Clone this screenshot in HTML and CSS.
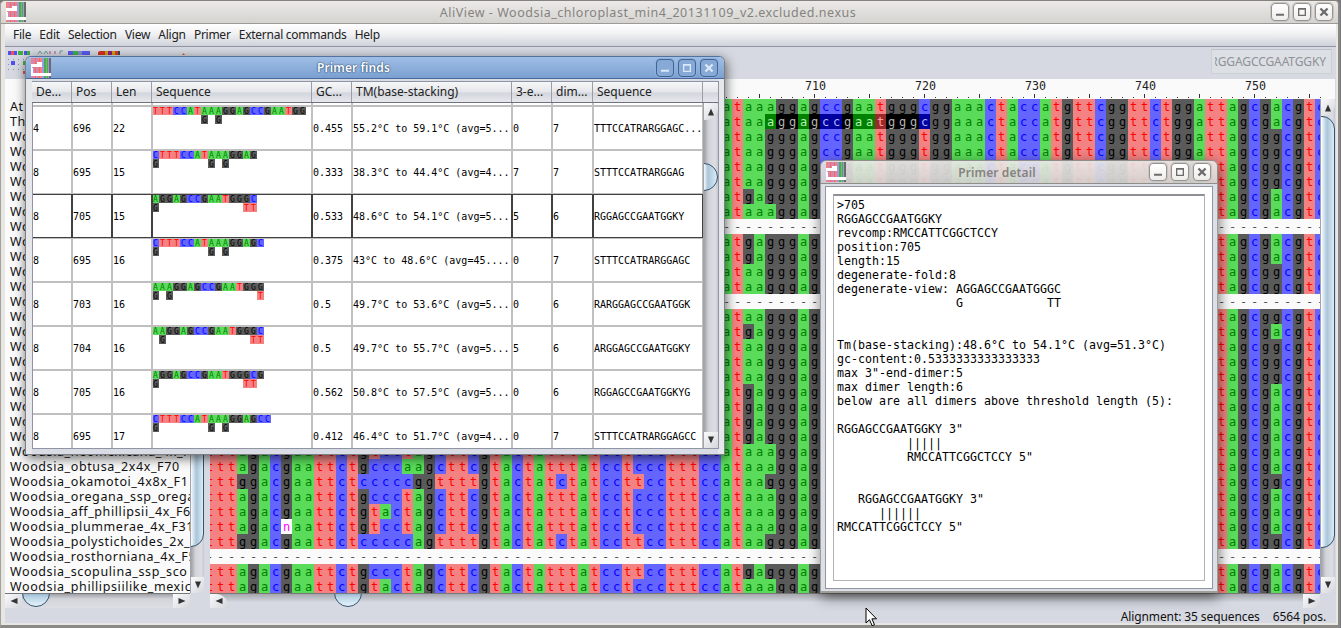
FILE: index.html
```html
<!DOCTYPE html>
<html lang="en">
<head>
<meta charset="utf-8">
<title>AliView</title>
<link rel="stylesheet" href="styles.css">
</head>
<body>
<svg width="0" height="0" class="defs">
  <symbol id="app" viewBox="0 0 20 20">
    <rect width="20" height="20" fill="#f48080"/>
    <path d="M2 0h1v20h-1zM6 0h1v20h-1z" fill="#b48ce0"/>
    <path d="M4 0h1v20h-1zM8 0h1v20h-1z" fill="#e46c78"/>
    <path d="M11 0h2v20h-2zM17 0h1v20h-1z" fill="#a098e8"/>
    <path d="M13 0h4v20h-4z" fill="#50a850"/><path d="M18 0h2v20h-2z" fill="#6a6a6a"/>
    <path d="M15 0h1v20h-1z" fill="#6cc06c"/>
    <path d="M0 6h6v-2h5v5h-10v2h-1zM0 15h20v3h-20zM0 10h2v5h-2z" fill="#fff"/>
  </symbol>
  <symbol id="min" viewBox="0 0 18 18"><path d="M4.500 11h9v2.200h-9z"/></symbol>
  <symbol id="max" viewBox="0 0 18 18"><path d="M4.500 4.500h9v9h-9zM6 6.500v5.500h6v-5.500z" fill-rule="evenodd"/></symbol>
  <symbol id="close" viewBox="0 0 18 18"><path d="M5 5l8 8M13 5l-8 8" stroke="currentColor" stroke-width="2.600"/></symbol>
  <symbol id="arr" viewBox="0 0 8 8"><path d="M4 .5L7 7.500H1z"/></symbol>
</svg>

<div class="main">
  <div class="titlebar">
    <svg class="appicon"><use href="#app"/></svg>
    <div class="title">AliView - Woodsia_chloroplast_min4_20131109_v2.excluded.nexus</div>
    <div class="btns"><svg viewBox="0 0 18 18"><use href="#min"/></svg><svg viewBox="0 0 18 18"><use href="#max"/></svg><svg viewBox="0 0 18 18"><use href="#close"/></svg></div>
  </div>
  <div class="body">
    <div class="menubar"><span>File</span><span>Edit</span><span>Selection</span><span>View</span><span>Align</span><span>Primer</span><span>External commands</span><span>Help</span></div>
    <div class="toolbar">
      <svg class="tools" viewBox="0 0 190 30">
        <path d="M0 4h3v4h-3zM6 4h3v4h-3zM16 4h3v4h-3z" fill="#5050ee"/><path d="M3 4h3v4h-3z" fill="#f05050"/><path d="M10 4h5v4h-5zM19 4h3v4h-3z" fill="#40b040"/>
        <path d="M0 12.500h22M0 17.500h22M0 22.500h22" stroke="#8c8cb4" stroke-dasharray="1 4"/>
        <path d="M3 14h4v4h-4z" fill="#5050ee"/><path d="M15 14h4v4h-4z" fill="#40b040"/><path d="M15 24h4v3h-4z" fill="#f05050"/>
        <path d="M30 7l2-3 2 3M36 7l2-3 2 3M52 7v-3h3" fill="none" stroke="#6c9c8c"/><path d="M42 4v3M47 4v3" stroke="#c05080"/>
        <path d="M60 4h5v4h-5zM74 4h8v4h-8z" fill="#5a5af0"/><path d="M65 4h5v4h-5z" fill="#40b050"/><path d="M70 4h4v4h-4z" fill="#8090d0"/>
        <path d="M90 5l2-1h5v4h-7z" fill="#d43020"/><path d="M97 4h3v4h-3zM104 4h3v4h-3z" fill="#d0a010"/><path d="M100 4h4v4h-4z" fill="#902080"/><path d="M107 4h3v4h-3z" fill="#d44030"/><path d="M110 4h2v4h-2z" fill="#445"/>
        <path d="M174 8l1.500-2 1.500 2z" fill="#e06020"/>
      </svg>
      <div class="search"><span>RGGAGCCGAATGGKY</span></div>
    </div>
    <div class="content">
      <div class="left">
        <div class="names" id="names"></div>
        <div class="vbar lbar"><div class="thumb"></div><div class="down"><svg><use href="#arr"/></svg></div></div>
        <div class="hbar"><div class="lt"><svg><use href="#arr"/></svg></div><div class="thumb"></div><div class="rt"><svg><use href="#arr"/></svg></div></div>
      </div>
      <div class="right">
        <div class="ruler" id="ruler"></div>
        <div class="align" id="align"></div>
        <div class="vbar rbar"><div class="up"><svg><use href="#arr"/></svg></div><div class="thumb"></div><div class="down"><svg><use href="#arr"/></svg></div></div>
        <div class="hbar"><div class="lt"><svg><use href="#arr"/></svg></div><div class="thumb"></div><div class="rt"><svg><use href="#arr"/></svg></div></div>
      </div>
    </div>
    <div class="status"><span>Alignment: 35 sequences</span><span>6564 pos.</span></div>
  </div>
</div>

<div class="win finds">
  <div class="titlebar">
    <svg class="appicon"><use href="#app"/></svg>
    <div class="title">Primer finds</div>
    <div class="btns"><svg viewBox="0 0 18 18"><use href="#min"/></svg><svg viewBox="0 0 18 18"><use href="#max"/></svg><svg viewBox="0 0 18 18"><use href="#close"/></svg></div>
  </div>
  <div class="pane">
    <div class="thead"><div>De...</div><div>Pos</div><div>Len</div><div>Sequence</div><div>GC...</div><div>TM(base-stacking)</div><div>3-e...</div><div>dim...</div><div>Sequence</div><div></div></div>
    <div class="tbody">
      <div class="rows" id="rows"></div>
      <div class="vbar tbar"><div class="up"><svg><use href="#arr"/></svg></div><div class="thumb"></div><div class="down"><svg><use href="#arr"/></svg></div></div>
    </div>
  </div>
</div>

<div class="win detail">
  <div class="titlebar">
    <svg class="appicon"><use href="#app"/></svg>
    <div class="title">Primer detail</div>
    <div class="btns"><svg viewBox="0 0 18 18"><use href="#min"/></svg><svg viewBox="0 0 18 18"><use href="#max"/></svg><svg viewBox="0 0 18 18"><use href="#close"/></svg></div>
  </div>
  <div class="frame"><div class="pane"><pre class="text">&gt;705
RGGAGCCGAATGGKY
revcomp:RMCCATTCGGCTCCY
position:705
length:15
degenerate-fold:8
degenerate-view: AGGAGCCGAATGGGC
                 G            TT


Tm(base-stacking):48.6°C to 54.1°C (avg=51.3°C)
gc-content:0.5333333333333333
max 3"-end-dimer:5
max dimer length:6
below are all dimers above threshold length (5):

RGGAGCCGAATGGKY 3"
          |||||
          RMCCATTCGGCTCCY 5"


   RGGAGCCGAATGGKY 3"
      ||||||
RMCCATTCGGCTCCY 5"</pre></div></div>
</div>

<svg class="cursor" viewBox="0 0 12 20"><path d="M1 1v15l3.500-3.300 2.600 6 2.400-1-2.600-5.900h4.600z" fill="#fff" stroke="#000"/></svg>
<script src="app.js"></script>
</body>
</html>
```

FILE: styles.css
```css
* { box-sizing: border-box; }
body { margin: 0; width: 1341px; height: 628px; overflow: hidden; position: relative; background: #77797e; font: 12px/15px "Noto Sans", "Open Sans", sans-serif; color: #222; }
.defs { position: absolute; }
svg { display: block; fill: currentColor; }

.titlebar { display: flex; align-items: center; height: 23px; flex: none; }
.appicon { width: 20px; height: 20px; }
.title { flex: 1; text-align: center; white-space: nowrap; }
.btns { display: flex; gap: 4px; color: #6c6c6c; }
.btns svg { width: 18px; height: 18px; border: 1px solid #96938e; border-radius: 4px; background: linear-gradient(#fff, #eeedeb); box-shadow: 0 0 0 1px #c8c6c2; overflow: hidden; }

.main { width: 1340px; height: 628px; display: flex; flex-direction: column; background: #e8e6e3; border-top: 1px solid #85827e; border-right: 2px solid #8a8782; border-left: 1px solid #a4a19d; border-bottom: 3px solid #8b8986; border-radius: 5px 5px 0 0; }
.main > .titlebar { padding: 0 5px; background: linear-gradient(#ebeae8, #d5d3d0); border-bottom: 1px solid #9c9a97; border-radius: 5px 5px 0 0; }
.main > .titlebar .title { color: #85837f; font-size: 12.500px; letter-spacing: .52px; padding: 0 1px 0 0; }
.body { flex: 1; margin: 0 2px 2px 4px; display: flex; flex-direction: column; background: #d6d9e1; min-height: 0; }
.menubar { height: 23px; flex: none; display: flex; gap: 8.200px; padding: 2px 0 0 8px; line-height: 18px; letter-spacing: -.26px; background: linear-gradient(#fff, #f0f1f3 45%, #cfd2da); border-bottom: 1px solid #9296a2; }
.toolbar { height: 32px; flex: none; display: flex; justify-content: space-between; }
.tools { width: 190px; height: 30px; margin-left: 3px; }
.search { width: 121px; height: 25px; margin: 2px 4px 0 0; border: 1px solid #cbd0d5; border-top-color: #bcc1c8; background: #dcdfe3; padding: 4px 5px 0 3px; color: #8e9199; }
.search span { display: flex; justify-content: flex-end; overflow: hidden; width: 111px; letter-spacing: -.1px; }
.content { display: flex; height: 529px; flex: none; }
.left { width: 199px; height: 529px; display: grid; grid-template: 514px 15px / 185px 14px; }
.names { background: #fafafa; padding: 20px 0 0 5px; overflow: hidden; font-size: 12.500px; letter-spacing: .6px; color: #111; white-space: pre; }
.names div { height: 15px; line-height: 15px; }
.right { width: 1126px; margin-left: 6px; height: 529px; display: grid; grid-template: 20px 494px 15px / 1110px 15px; }
.ruler { grid-column: 1 / 3; background: #fafafa; display: flex; overflow: hidden; font: 11.630px/12px "DejaVu Sans Mono", monospace; }
.ruler div { flex: none; width: 11px; display: flex; flex-direction: column; align-items: center; justify-content: flex-end; white-space: nowrap; }
.ruler div:first-child { margin-left: -6px; }
.ruler span { width: 40px; padding-left: 2px; text-align: center; height: 14px; flex: none; }
.ruler i { width: 1px; height: 1px; background: #333; margin-bottom: 1px; }
.ruler i.big { height: 4px; }
.align { overflow: hidden; background: #fafafa; font: 12px/15px "DejaVu Sans Mono", monospace; }
.line { display: flex; margin-left: -6px; height: 15px; }
.line b { flex: none; width: 11px; height: 15px; font-weight: normal; text-align: center; line-height: 16px; }
.line .pad { width: 506px; flex: none; }
.a { background: #5adc5a; color: #008000; }
.c { background: #6464ff; color: #0000ff; }
.g { background: #5a5a5a; color: #000; }
.t { background: #f48282; color: #ff0000; }
.n { background: #fff; color: #f0f; }
.gap { color: #555; }
.sel.a { background: #008200; color: #b4f0b4; }
.sel.c { background: #0000a0; color: #b4b4ff; }
.sel.g { background: #000; color: #b4b4b4; }
.sel.t { background: #9c2a2a; color: #ffa0a0; }
.status { display: flex; justify-content: flex-end; gap: 13px; padding: 1px 10px 0 0; letter-spacing: -.1px; color: #111; }

.vbar { display: flex; flex-direction: column; background: linear-gradient(90deg, #9fa1a7, #d2d4da 35%, #dcdee4 80%, #c4c7ce); border-left: 1px solid #a0a3aa; overflow: hidden; }
.vbar svg, .hbar svg { width: 8px; height: 8px; }
.up, .down, .lt, .rt { flex: none; display: flex; align-items: center; justify-content: center; background: linear-gradient(135deg, #fafafb, #d3d6dc); color: #333; }
.up, .down { height: 16px; }
.up { border-bottom-right-radius: 12px; border-top-right-radius: 2px; }
.down { margin-top: auto; }
.down svg { transform: rotate(180deg); }
.thumb { flex: none; border: 1.500px solid #35536e; background: linear-gradient(90deg, #f4f9fc, #a9c5da 45%, #dcedf7); }
.rbar .up { height: 17px; }
.rbar .thumb { height: 432px; margin-left: -8px; border-radius: 0 13px 13px 0; background: linear-gradient(90deg, #fff 35%, #a9c5da 65%, #dcecf7); }
.lbar .thumb { height: 468px; margin-left: -8px; border-radius: 0 0 13px 0; background: linear-gradient(90deg, #fff 35%, #a9c5da 65%, #dcecf7); }
.tbar .up { height: 17px; }
.tbar .thumb { width: 28px; height: 28px; margin: 43px 0 0 -14px; border-radius: 14px; background: linear-gradient(90deg, #fff 48%, #a9c5da 65%, #dcecf7); }
.hbar { grid-column: 1; display: flex; background: linear-gradient(#9fa1a7, #d2d4da 35%, #dcdee4); border-top: 1px solid #777; overflow: hidden; }
.left .hbar { grid-row: 2; }
.right .hbar { grid-row: 3; }
.hbar .thumb { width: 28px; height: 28px; margin-top: -15px; border-radius: 14px; background: linear-gradient(#8fb0c8 50%, #b8d2e4 65%, #e6f4fb); }
.lt, .rt { width: 17px; }
.left .lt + .thumb { margin-left: 0; }
.lt svg { transform: rotate(-90deg); }
.rt { margin-left: auto; }
.rt svg { transform: rotate(90deg); }
.right .lt { width: 18px; border-bottom-right-radius: 2px; border-top-right-radius: 12px; }
.right .lt + .thumb { margin-left: 106px; }
.right .hbar { background: linear-gradient(#a5a7ad, #d6d9e1 60%); }

.win { position: absolute; display: flex; flex-direction: column; border-radius: 6px 6px 0 0; }
.finds { left: 25px; top: 56px; width: 700px; height: 399px; padding: 0 6px; border: 1px solid #7c7f86; border-top: 1px solid #53739c; background: linear-gradient(#d9dce4, #d9dce4) content-box, #e6e7eb; box-shadow: 1px 3px 12px rgba(0,0,0,.6); }
.finds .titlebar { height: 22px; margin: 0 -6px; padding: 0 6px 0 5px; background: linear-gradient(#a0bfe6, #7a9fd0); border-bottom: 1px solid #44699a; border-radius: 5px 5px 0 0; }
.finds .title { color: #fff; font-size: 12px; font-weight: 600; text-shadow: 0 0 1px #24456f, 0 0 2px #24456f; letter-spacing: .1px; }
.finds .btns { color: #dce8f8; }
.finds .btns svg { background: #86a9d6; border-color: #3f6496; box-shadow: 0 0 0 1px #8fb0da; }
.finds .pane { margin-top: 2px; height: 368px; width: 687px; border: 1px solid #8f95a3; background: #fff; display: flex; flex-direction: column; }
.thead, .trow { display: grid; grid-template-columns: 40px 40px 40px 160px 40px 160px 40px 41px 110px 15px; }
.thead { height: 21px; flex: none; margin-left: -1px; border-bottom: 1px solid #6c7280; background: linear-gradient(#f6f7f8, #e4e6ea 50%, #d2d5dc 55%, #e6e8ec); }
.thead div { border-right: 1px solid #9a9ea8; padding-left: 4px; line-height: 20px; overflow: hidden; white-space: nowrap; }
.thead div:last-child { border: 0; }
.tbody { display: flex; flex: 1; min-height: 0; overflow: hidden; }
.rows { width: 671px; margin-left: -1px; overflow: hidden; flex: none; }
.trow { grid-template-columns: 40px 40px 40px 160px 40px 160px 40px 41px 110px; height: 44px; font: 10px/44px "DejaVu Sans Mono", monospace; color: #000; }
.trow > div { border: 1px solid #c0c0c0; overflow: hidden; white-space: nowrap; }
.trow.stub { height: 3px; }
.trow.stub > div { border-top: 0; }
.trow.focus > div { border-color: #404040; }
.tbar { width: 15px; }
.trow .primer { margin: -1px 0 0 -1px; font-size: 8px; line-height: 11px; }
.primer div { display: flex; }
.primer b { width: 7px; height: 9px; font-weight: normal; text-align: center; overflow: hidden; }

.detail { left: 820px; top: 160px; width: 398px; height: 433px; box-shadow: 1px 4px 14px rgba(0,0,0,.55); }
.detail .titlebar { height: 24px; padding: 0 6px 0 5px; background: linear-gradient(rgba(236,235,233,.9), rgba(212,210,207,.93)); border: 1px solid #908e8b; border-radius: 6px 6px 0 0; }
.detail .title { color: #85837f; font-weight: 600; padding-right: 1px; letter-spacing: .1px; }
.frame { height: 409px; padding: 2px 4px 0; background: #dcdfe6; border: 1px solid #a09e9b; border-top: 0; border-bottom: 2px solid #a09e9b; }
.detail .pane { width: 388px; height: 403px; border: 1px solid #8f95a3; background: #fff; padding: 7px; }
.text { margin: 0; height: 387px; width: 372px; border: 1px solid #b0b2b6; border-top: 2px solid #8e9095; padding: 2px 0 0 3px; font: 11.630px/14px "DejaVu Sans Mono", monospace; color: #000; }
.cursor { position: absolute; left: 865px; top: 607px; width: 12px; height: 20px; }
```

FILE: app.js
```js
const el = (tag, cls, text) => {
  const e = document.createElement(tag);
  if (cls) e.className = cls;
  if (text !== undefined) e.textContent = text;
  return e;
};

// Sequence names
const names = ["At", "Th"].concat(Array(21).fill("Wo"), [
  "Woodsia_neomexicana_4x_F", "Woodsia_obtusa_2x4x_F70", "Woodsia_okamotoi_4x8x_F1",
  "Woodsia_oregana_ssp_orega", "Woodsia_aff_phillipsii_4x_F6", "Woodsia_plummerae_4x_F31",
  "Woodsia_polystichoides_2x_", "Woodsia_rosthorniana_4x_F5", "Woodsia_scopulina_ssp_sco",
  "Woodsia_phillipsiilike_mexic"]);
names.forEach(n => document.getElementById("names").append(el("div", "", n)));

// Ruler: column 0 is position 655
const ruler = document.getElementById("ruler");
for (let i = 0; i < 102; i++) {
  const pos = 655 + i, d = el("div");
  if (pos % 10 === 0 && i > 50) d.append(el("span", "", pos));
  d.append(el("i", pos % 5 ? "" : "big"));
  ruler.append(d);
}

// Alignment
const mid = "tactatttatcctccctttccat";
const alt = "tactatctatccttcctttccat";
const heads = {
  23: "tttagacgaattctgtcctagcttcg" + mid, 24: "tttagacgaattctgcccaagcttcg" + mid,
  25: "tttggacgaattctcccccggttttg" + alt, 26: "tttagacgaattctgccctagcttcg" + mid,
  27: "tttagacgaattctgtactagcttcg" + mid, 28: "tttagacnaattctgtcctagcttcg" + mid,
  29: "tttggacgaattctcccccagttttg" + alt, 31: "tttagacgaattctgccctagcttcgtactatttatccttcctttccat",
  32: "tttagacgaattctgtactagcttcg" + mid
};
const var49 = ["aaa", "aaa", "aag", "aag", "aag", "aag", "gag", "aaa", "", "gag", "gag", "aag", "aag", "",
  "aag", "gag", "aag", "aag", "aag", "gag", "gag", "gag", "gag", "aaa", "aaa", "aag", "aaa", "aaa", "aaa", "aag", "", "gag", "aaa"];
const var97 = "aaggggaa-aagg-gagggaaaaaagaaag-aa";
const grid = document.getElementById("align");
for (let r = 0; r < 33; r++) {
  const line = el("div", "line");
  let seq, start = 0;
  if (!var49[r]) {
    seq = "-".repeat(102);
    if (r < 23) { seq = seq.slice(46); start = 46; }
  } else {
    if (!heads[r]) start = 46;
    seq = (heads[r] || "cat") + var49[r] + "ggagccgaatggg" + (r < 2 ? "c" : "t") +
      "ggaaactaccatgttcggttctggattagcg" + var97[r] + "cgtc";
  }
  if (start) line.append(el("span", "pad"));
  [...seq].forEach((ch, i) => {
    const col = i + start;
    line.append(el("b", (ch === "-" ? "gap" : ch) + (r === 1 && col > 50 && col < 66 ? " sel" : ""), ch));
  });
  grid.append(line);
}

// Primer table
const data = [
  ["4", "696", "22", "TTTCCATAAAGGAGCCGAATGG", "       G G", "0.455", "55.2°C to 59.1°C (avg=5...", "0", "7", "TTTCCATRARGGAGC..."],
  ["8", "695", "15", "CTTTCCATAAAGGAG", "G       G G", "0.333", "38.3°C to 44.4°C (avg=4...", "7", "7", "STTTCCATRARGGAG"],
  ["8", "705", "15", "AGGAGCCGAATGGGC", "G            TT", "0.533", "48.6°C to 54.1°C (avg=5...", "5", "6", "RGGAGCCGAATGGKY"],
  ["8", "695", "16", "CTTTCCATAAAGGAGC", "G       G G", "0.375", "43°C to 48.6°C (avg=45....", "0", "7", "STTTCCATRARGGAGC"],
  ["8", "703", "16", "AAAGGAGCCGAATGGG", "G G            T", "0.5", "49.7°C to 53.6°C (avg=5...", "0", "6", "RARGGAGCCGAATGGK"],
  ["8", "704", "16", "AAGGAGCCGAATGGGC", " G            TT", "0.5", "49.7°C to 55.7°C (avg=5...", "5", "6", "ARGGAGCCGAATGGKY"],
  ["8", "705", "16", "AGGAGCCGAATGGGCG", "G            TT", "0.562", "50.8°C to 57.5°C (avg=5...", "0", "6", "RGGAGCCGAATGGKYG"],
  ["8", "695", "17", "CTTTCCATAAAGGAGCC", "G       G G", "0.412", "46.4°C to 51.7°C (avg=4...", "0", "7", "STTTCCATRARGGAGCC"]
];
const rows = document.getElementById("rows");
const stub = el("div", "trow stub");
for (let i = 0; i < 9; i++) stub.append(el("div"));
rows.append(stub);
data.forEach((d, r) => {
  const row = el("div", "trow" + (r === 2 ? " focus" : ""));
  d.forEach((v, i) => {
    if (i === 4) return;
    const cell = el("div");
    if (i === 3) {
      const p = el("div", "primer");
      [v, d[4]].forEach(s => {
        const l = el("div");
        [...s].forEach(ch => l.append(el("b", ch === " " ? "" : ch.toLowerCase(), ch)));
        p.append(l);
      });
      cell.append(p);
    } else cell.textContent = v;
    row.append(cell);
  });
  rows.append(row);
});
```
